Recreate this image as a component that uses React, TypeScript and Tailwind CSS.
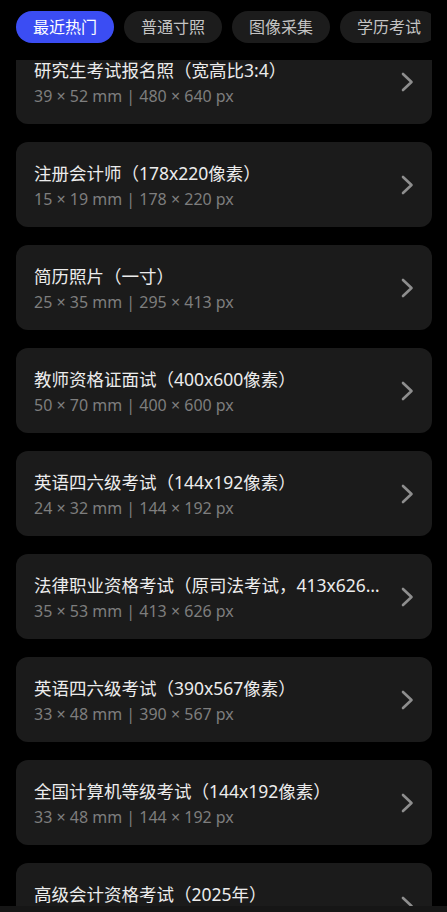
import React from "react";

const tabs = ["最近热门", "普通寸照", "图像采集", "学历考试"];

const items: { title: string; sub: string }[] = [
  { title: "研究生考试报名照（宽高比3:4）", sub: "39 × 52 mm | 480 × 640 px" },
  { title: "注册会计师（178x220像素）", sub: "15 × 19 mm | 178 × 220 px" },
  { title: "简历照片（一寸）", sub: "25 × 35 mm | 295 × 413 px" },
  { title: "教师资格证面试（400x600像素）", sub: "50 × 70 mm | 400 × 600 px" },
  { title: "英语四六级考试（144x192像素）", sub: "24 × 32 mm | 144 × 192 px" },
  { title: "法律职业资格考试（原司法考试，413x626像素）", sub: "35 × 53 mm | 413 × 626 px" },
  { title: "英语四六级考试（390x567像素）", sub: "33 × 48 mm | 390 × 567 px" },
  { title: "全国计算机等级考试（144x192像素）", sub: "33 × 48 mm | 144 × 192 px" },
  { title: "高级会计资格考试（2025年）", sub: "33 × 48 mm | 390 × 567 px" },
];

function Chevron() {
  return (
    <svg width="13" height="20" viewBox="0 0 13 20" fill="none" className="shrink-0">
      <polyline
        points="2,2 10.5,10 2,18"
        stroke="#8e8e8e"
        strokeWidth="2.6"
        strokeLinecap="round"
        strokeLinejoin="round"
      />
    </svg>
  );
}

export default function App() {
  return (
    <div
      className="w-[447px] h-[912px] bg-black flex flex-col overflow-hidden"
      style={{ fontFamily: '"Noto Sans", "Noto Sans CJK SC", sans-serif' }}
    >
      <div className="h-[60px] shrink-0 px-4 pt-[11px] bg-black relative z-10">
        <div className="flex gap-[10px] overflow-hidden">
          {tabs.map((t, i) => (
            <div
              key={t}
              className={
                i === 0
                  ? "h-8 px-[17px] rounded-full shrink-0 flex items-center text-[16px] bg-[#3b4df3] text-white"
                  : "h-8 px-[17px] rounded-full shrink-0 flex items-center text-[16px] bg-[#1c1c1c] text-[#c4c4c4]"
              }
            >
              {t}
            </div>
          ))}
        </div>
      </div>
      <div className="flex-1 overflow-hidden">
        <div className="-mt-[21px] flex flex-col gap-[18px] pl-4 pr-[15px]">
          {items.map((it, i) => (
            <div
              key={i}
              className="h-[85px] shrink-0 rounded-[12px] bg-[#1b1b1b] flex items-center pl-[18px] pr-[18px]"
            >
              <div className="flex-1 min-w-0 flex flex-col">
                <div className="text-[17.5px] leading-[24px] text-[#ececec] truncate">{it.title}</div>
                <div className="mt-[4px] text-[16px] leading-[20px] text-[#7e7e7e] truncate">{it.sub}</div>
              </div>
              <div className="ml-4 flex items-center">
                <Chevron />
              </div>
            </div>
          ))}
        </div>
      </div>
      <div className="h-[6px] shrink-0 bg-[#161616]" />
    </div>
  );
}
